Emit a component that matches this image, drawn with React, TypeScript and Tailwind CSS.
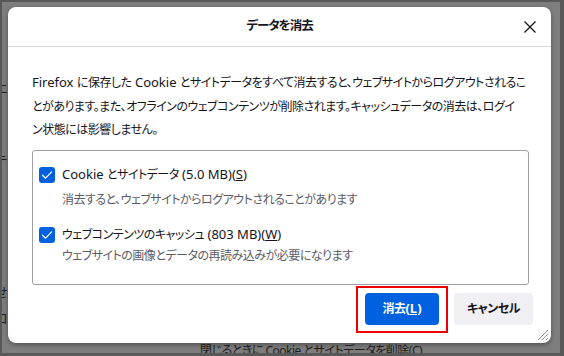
import React from "react";

const CJK = /([\u3000-\u30ff\u3400-\u9fff\uff00-\uffef]+)/;

function T({ s }: { s: string }) {
  return (
    <>
      {s.split(CJK).map((p, i) =>
        i % 2 ? (
          <span key={i} className="text-[12px] tracking-[-0.5px]">
            {p}
          </span>
        ) : (
          p
        )
      )}
    </>
  );
}

function Check() {
  return (
    <span className="flex items-center justify-center w-4 h-4 rounded-[3px] bg-[#0061e0] shrink-0">
      <svg width="12" height="12" viewBox="0 0 12 12" fill="none">
        <path d="M1.5 6.2 L4.6 9.2 L10.6 2.8" stroke="white" strokeWidth="1.2" strokeLinecap="round" strokeLinejoin="round" />
      </svg>
    </span>
  );
}

export default function App() {
  return (
    <div className="relative w-[564px] h-[356px] overflow-hidden bg-[#7e7e7e] border-[#585858] border-t-2 border-l-2 border-r-4 border-b-[3px] font-['Noto_Sans','Noto_Sans_CJK_JP',sans-serif] text-[#15141a] [font-feature-settings:'palt']">
      {/* page behind the overlay */}
      <div className="flex flex-col text-[13px] text-[#1d1d1d] leading-5 -ml-[7px]">
        <span className="mt-[76px]">エ</span>
        <span className="mt-[52px]">テ</span>
        <span className="mt-[112px]">せ</span>
        <span className="mt-[6px]">ロ</span>
        <span className="ml-[205px] mt-[13px] whitespace-nowrap text-[12px] tracking-[-0.5px]">閉じるときに Cookie とサイトデータを削除(<u>C</u>)</span>
      </div>

      <div className="absolute left-[6px] top-[5px] w-[543px] h-[336px] bg-white rounded-lg shadow-[0_2px_5px_rgba(0,0,0,0.35)] flex flex-col">
        <div className="relative h-10 shrink-0 border-b border-[#d8d8dc] flex items-center justify-center">
          <span className="text-[12.5px] tracking-[-1px] font-bold">データを消去</span>
          <button className="absolute right-[13px] top-[12px] w-4 h-4 flex items-center justify-center">
            <svg width="14" height="14" viewBox="0 0 14 14" fill="none">
              <path d="M1.5 1.5 L12.5 12.5 M12.5 1.5 L1.5 12.5" stroke="#15141a" strokeWidth="1.3" />
            </svg>
          </button>
        </div>

        <div className="pl-6 pr-[22px] flex flex-col">
          <p className="mt-6 text-[13px] leading-[23.5px] whitespace-nowrap">
            <span className="block"><T s="Firefox に保存した Cookie とサイトデータをすべて消去すると、ウェブサイトからログアウトされるこ" /></span>
            <span className="block"><T s="とがあります。また、オフラインのウェブコンテンツが削除されます。キャッシュデータの消去は、ログイ" /></span>
            <span className="block"><T s="ン状態には影響しません。" /></span>
          </p>

          <div className="mt-2 h-[135px] border border-[#9f9fa6] rounded-[3px] pl-[6px] pt-[14px] text-[13px] leading-5">
            <div className="flex items-center gap-[7px] h-5">
              <Check />
              <span><T s="Cookie とサイトデータ (5.0 MB)(" /><u>S</u>)</span>
            </div>
            <div className="ml-[23px] mt-1 h-5 text-[#5b5b66]"><T s="消去すると、ウェブサイトからログアウトされることがあります" /></div>
            <div className="flex items-center gap-[7px] h-5 mt-4">
              <Check />
              <span><T s="ウェブコンテンツのキャッシュ (803 MB)(" /><u>W</u>)</span>
            </div>
            <div className="ml-[23px] h-5 text-[#5b5b66]"><T s="ウェブサイトの画像とデータの再読み込みが必要になります" /></div>
          </div>

          <div className="mt-[1px] -mr-1 flex justify-end items-start text-[13px] font-bold">
            <div className="border-2 border-[#ee0000] px-[7px] pt-[5px] pb-[6px]">
              <button className="w-[74px] h-8 rounded bg-[#0061e0] text-white">
                <span className="text-[12px] tracking-[-0.5px]">消去</span>(<u>L</u>)
              </button>
            </div>
            <button className="ml-[6px] mt-[7px] w-[79px] h-8 rounded bg-[#f0f0f4] text-[#15141a] text-[12px] tracking-[-0.5px]">キャンセル</button>
          </div>
        </div>

        <svg className="absolute right-[2px] bottom-[2px]" width="13" height="13" viewBox="0 0 13 13" fill="none">
          <path d="M12 2 L2 12 M12 6 L6 12 M12 10 L10 12" stroke="#8f8f9d" strokeWidth="1" />
        </svg>
      </div>
    </div>
  );
}
